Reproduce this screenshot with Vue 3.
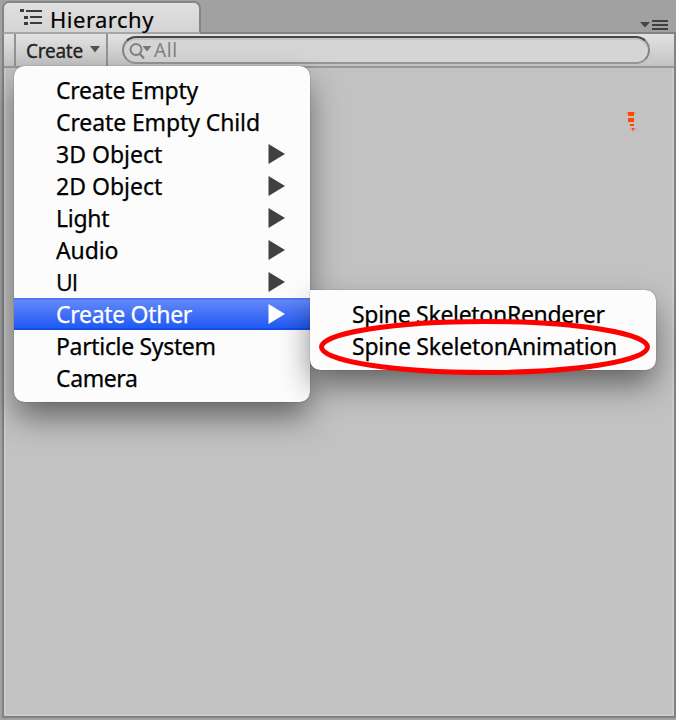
<script setup>
const items = [
  { label: 'Create Empty', tracking: -0.27 },
  { label: 'Create Empty Child', tracking: -0.11 },
  { label: '3D Object', sub: true, tracking: 0 },
  { label: '2D Object', sub: true, tracking: 0 },
  { label: 'Light', sub: true, tracking: -0.3 },
  { label: 'Audio', sub: true, tracking: -0.1 },
  { label: 'UI', sub: true, plain: true, tracking: -1 },
  { label: 'Create Other', sub: true, active: true, tracking: -0.3 },
  { label: 'Particle System', tracking: -0.33 },
  { label: 'Camera', tracking: -0.4 },
]
const subItems = [
  { label: 'Spine SkeletonRenderer', tracking: -0.3 },
  { label: 'Spine SkeletonAnimation', tracking: -0.25 },
]
</script>

<template>
  <div class="window">
    <header class="tabs">
      <div class="tab">
        <svg class="tab-icon" width="24" height="18" viewBox="0 0 24 18">
          <g fill="#3c3c3c">
            <path d="M0 0h4v3H0zM6 1h16v2H6zM4 7h4v3H4zM10 7h12v2H10zM4 13h4v3H4zM10 13h12v2H10z" />
          </g>
        </svg>
        <span class="tab-title">Hierarchy</span>
      </div>
      <svg class="pane-menu" width="28" height="11" viewBox="0 0 28 11">
        <path d="M0 2h10L5 7.5z" fill="#444" />
        <path d="M12 0h16v2H12zM12 4h16v2H12zM12 8h16v2H12z" fill="#404040" />
      </svg>
    </header>
    <main class="panel">
      <div class="toolbar">
        <div class="create">
          <span class="create-label">Create</span>
          <svg class="caret" width="10" height="7" viewBox="0 0 10 7"><path d="M0 0h10L5 6.500z" fill="#505050" /></svg>
        </div>
        <div class="search">
          <svg width="24" height="18" viewBox="0 0 24 18">
            <circle cx="7" cy="7.500" r="5.500" fill="none" stroke="#808080" stroke-width="2" />
            <path d="M10.500 11.500l4.500 5" stroke="#808080" stroke-width="2.200" />
            <path d="M13.500 4h9L18 9.500z" fill="#777" />
          </svg>
          <span class="all">All</span>
        </div>
      </div>
      <div class="body">
        <svg class="bone" width="10" height="20" viewBox="0 0 10 20">
          <path d="M2 0h6v4H2zM2 6h6v4H2zM4 12h4v2H4zM6 16h2v2H6z" fill="#ff4800" />
          <path d="M0 0h2v2H0zM8 0h2v2H8zM4 16h2v2H4zM8 16h2v2H8zM6 18h2v2H6z" fill="#d9a090" />
        </svg>
      </div>
    </main>

    <nav class="menu main-menu">
      <div v-for="i in items" :key="i.label" class="item" :class="{ active: i.active }">
        <span class="label" :class="{ plain: i.plain }" :style="{ letterSpacing: i.tracking + 'px' }">{{ i.label }}</span>
        <svg v-if="i.sub" class="arrow" width="18" height="20" viewBox="0 0 18 20"><path d="M0.500 0L17 10L0.500 20z" fill="currentColor" /></svg>
      </div>
    </nav>
    <nav class="menu sub-menu">
      <div v-for="s in subItems" :key="s.label" class="item">
        <span class="label" :style="{ letterSpacing: s.tracking + 'px' }">{{ s.label }}</span>
      </div>
    </nav>
    <svg class="ring" width="334" height="58" viewBox="0 0 334 58">
      <ellipse cx="166.500" cy="29" rx="163" ry="25.500" fill="none" stroke="#f00" stroke-width="5" />
    </svg>
  </div>
</template>

<style>
body { margin: 0; overflow: hidden; }
</style>

<style scoped>
.window {
  position: relative;
  box-sizing: border-box;
  width: 676px;
  height: 720px;
  padding: 0 0 2px 2px;
  background: #a1a1a1;
  font-family: "Noto Sans", "Open Sans", sans-serif;
  display: flex;
  flex-direction: column;
  overflow: hidden;
}
.tabs {
  height: 34px;
  box-sizing: border-box;
  border-bottom: 2px solid #828282;
  display: flex;
  justify-content: space-between;
  flex: none;
}
.tab {
  box-sizing: border-box;
  width: 199px;
  margin-top: 1px;
  height: 33px;
  border: 2px solid #858585;
  border-bottom-color: #a6a6a6;
  border-radius: 7px 7px 0 0;
  background: linear-gradient(#e0e0e0, #d4d4d4);
  display: flex;
  padding: 6px 0 0 16px;
}
.tab-icon { flex: none; }
.tab-title {
  font-size: 22px;
  line-height: 28px;
  margin: -4px 0 0 6px;
  letter-spacing: 0.5px;
  white-space: nowrap;
  -webkit-text-stroke: 0.2px currentColor;
}
.pane-menu { margin: 20px 8px 0 0; }
.panel {
  flex: 1;
  box-sizing: border-box;
  border: 2px solid #828282;
  border-top: 0;
  display: flex;
  flex-direction: column;
}
.toolbar {
  height: 34px;
  box-sizing: border-box;
  border-bottom: 2px solid #989898;
  background: linear-gradient(#e2e2e2, #c3c3c3);
  display: flex;
  flex: none;
  padding-left: 10px;
}
.create {
  box-sizing: border-box;
  width: 94px;
  height: 32px;
  border: solid #929292;
  border-width: 0 2px;
  display: flex;
  padding-left: 10px;
}
.create-label {
  font-size: 19px;
  line-height: 34px;
  width: 64px;
  letter-spacing: -0.25px;
  color: #222;
  -webkit-text-stroke: 0.3px currentColor;
}
.caret { margin-top: 12px; }
.search {
  box-sizing: border-box;
  width: 528px;
  height: 28px;
  margin: 2px 0 0 14px;
  border: 2px solid #969696;
  border-top-color: #484848;
  border-left-color: #858585;
  border-right-color: #858585;
  border-radius: 14px;
  background: #d5d5d5;
  box-shadow: inset 0 2px 0 #c3c3c3;
  display: flex;
  padding: 4px 0 0 5px;
}
.all { font-size: 19px; line-height: 20px; color: #828282; margin: -2px 0 0 1px; letter-spacing: 0.6px; }
.body {
  flex: 1;
  border: 2px solid #cbcbcb;
  border-top: 0;
  background: #c2c2c2;
  display: flex;
  justify-content: flex-end;
}
.bone { margin: 44px 36px 0 0; }
.menu {
  position: absolute;
  box-sizing: border-box;
  background: #fcfcfc;
  border-radius: 10px;
  padding: 8px 0;
  box-shadow: 0 0 1px rgba(0, 0, 0, .65), 0 16px 32px -2px rgba(0, 0, 0, .5);
}
.main-menu { left: 14px; top: 66px; width: 296px; height: 336px; }
.sub-menu { left: 310px; top: 290px; width: 346px; height: 80px; border-radius: 0 10px 10px 10px; }
.item {
  height: 32px;
  display: flex;
  justify-content: space-between;
  align-items: center;
  padding: 0 24px 0 42px;
  font-size: 23px;
  line-height: 30px;
  color: #000;
  white-space: nowrap;
}
.label { padding-bottom: 1px; -webkit-text-stroke: 0.25px currentColor; }
.plain { font-family: "Open Sans", sans-serif; }
.arrow { color: #404040; flex: none; }
.active {
  box-sizing: border-box;
  color: #fff;
  background: linear-gradient(#5376ee 0 2px, #6389f9 2px, #2059f4 30px, #104ee6 30px);
}
.active .arrow { color: #fff; }
.ring { position: absolute; left: 318px; top: 318px; }
</style>
